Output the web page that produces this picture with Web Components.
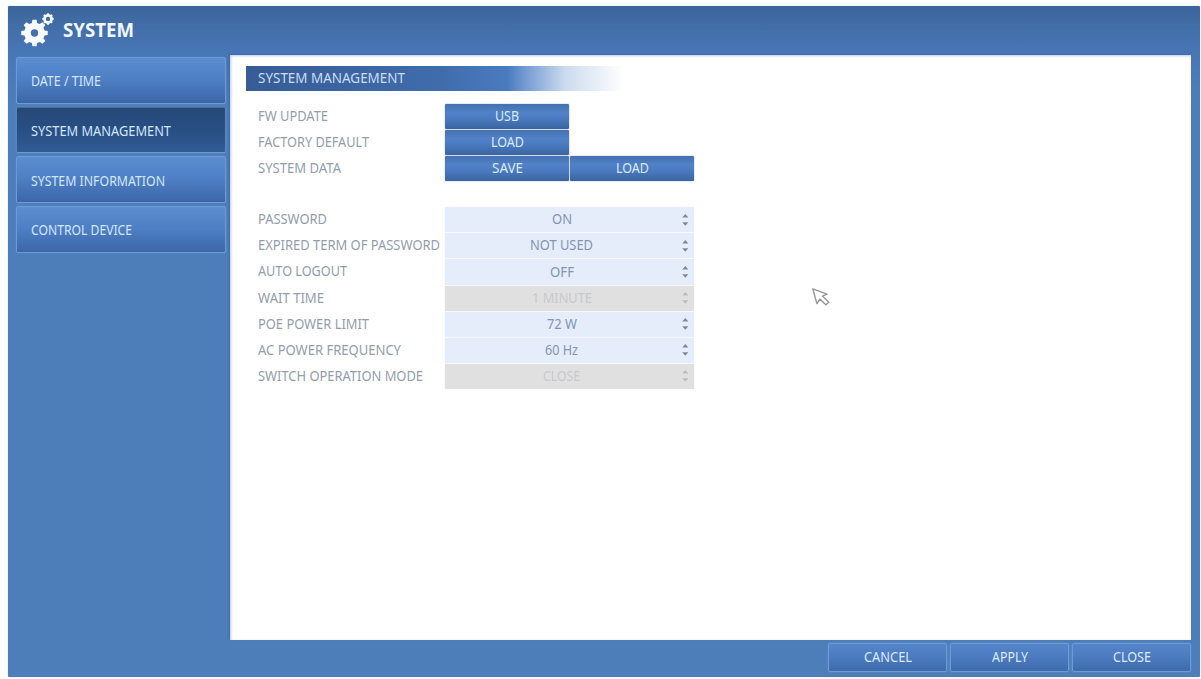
<!DOCTYPE html>
<html lang="en"><head><meta charset="utf-8"><title>System</title>
<style>
html,body{margin:0;height:100%;background:#fdfefe;overflow:hidden}
body{font-family:"Noto Sans","Open Sans",sans-serif;font-size:14px}
</style></head><body>
<system-screen></system-screen>
<script>
const define=(name,css,html,ready)=>{
  const t=document.createElement('template');
  t.innerHTML=`<style>*{box-sizing:border-box}${css}</style>${html}`;
  customElements.define(name,class extends HTMLElement{
    connectedCallback(){
      if(this.shadowRoot)return;
      this.attachShadow({mode:'open'}).append(t.content.cloneNode(true));
      if(ready)ready(this,this.shadowRoot);
    }
  });
};

/* A caption condensed or extended to a fixed width. */
define('fit-text',
  ':host{display:block;flex:none;white-space:nowrap;line-height:20px}span{display:inline-block;transform-origin:0 50%}',
  '<span><slot></slot></span>',
  (el,root)=>{
    const w=+el.getAttribute('w'),s=root.querySelector('span');
    el.style.width=w+'px';
    const n=s.getBoundingClientRect().width;
    if(n)s.style.transform=`scaleX(${w/n})`;
  });

define('gear-icon',':host{display:block;flex:none;width:34px;height:36px}svg{display:block}',
  '<svg width="34" height="36" viewBox="0 0 34 36" fill="#f7fbff"><g id="big"></g><g id="small"></g></svg>',
  (el,root)=>{
    const gear=(cx,cy,ro,ri,hole,n)=>{
      let d='';
      for(let i=0;i<n;i++){
        [[-.32,ri],[-.2,ro],[.2,ro],[.32,ri]].forEach(([o,r],k)=>{
          const a=(i+o)/n*2*Math.PI-Math.PI/2;
          d+=(i||k?'L':'M')+(cx+r*Math.cos(a)).toFixed(2)+' '+(cy+r*Math.sin(a)).toFixed(2);
        });
      }
      return `<path fill-rule="evenodd" d="${d}Z M${cx-hole} ${cy}a${hole} ${hole} 0 1 0 ${2*hole} 0a${hole} ${hole} 0 1 0 ${-2*hole} 0Z"/>`;
    };
    root.getElementById('big').innerHTML=gear(13.5,20,13.4,10.4,3.7,8);
    root.getElementById('small').innerHTML=gear(27,5.9,5.8,4.9,2.2,8);
  });

define('nav-item',`
:host{display:flex;align-items:center;height:46.7px;padding:2px 0 0 14px;border:1px solid #6b9bd8;border-radius:2px;color:#d3e7fc;
background:linear-gradient(#5b8dd0,#4f80c5 45%,#3f6aad 92%,#3c66a3);box-shadow:0 0 1px #6d9bd5;}
:host([selected]){background:linear-gradient(#264876,#284f84 50%,#305b94);border-color:#44709f #5b88bf #6d9bd2 #5585bd}
`,'<slot></slot>');

define('blue-button',`
:host{display:flex;align-items:center;justify-content:center;width:124px;height:25px;padding-bottom:1px;border-radius:1px;color:#d9ebfd;
background:linear-gradient(#4470ae,#5182c8 35%,#4877bb 65%,#3b64a0);box-shadow:0 0 1.5px #7b9dcd}
:host([outlined]){flex:1;width:auto;height:29px;padding:0 0 2px;border:1.5px solid #6b9bd8;border-radius:2px;background:linear-gradient(#5585ca,#4b7abf 50%,#3f6baa)}
`,'<slot></slot>');

define('spin-field',`
:host{display:flex;align-items:center;width:249px;height:25.1px;background:#e5edfb;box-shadow:0 0 1px #e5edfb;color:#8294b2}
:host([disabled]){background:#e0e0e0;box-shadow:0 0 1px #e0e0e0;color:#c9c9cd}
div{flex:1;display:flex;justify-content:center;padding:0 0 1px}
svg{flex:none;width:16px;height:14px;fill:#7c8799}
:host([disabled]) svg{fill:#b9bbc0}
`,'<div><slot></slot></div><svg viewBox="0 0 16 14"><path d="M4.3 4.5 7.3 1l3 3.5zM4.3 9.2h6l-3 3.5z"/></svg>');

define('form-row',`
:host{display:flex;height:26.1px;align-items:flex-start}
.l{width:187px;flex:none;height:25px;display:flex;align-items:center;padding-bottom:1px;color:#929eab}
.c{display:flex;gap:1px}
`,'<div class="l"><slot name="label"></slot></div><div class="c"><slot></slot></div>');

define('section-title',`
:host{display:flex;align-items:center;height:25px;width:390px;margin-left:-12px;padding:0 0 1px 12px;color:#c9def6;
background:linear-gradient(90deg,transparent 67%,rgba(255,255,255,.72) 82%,#fff 97%),linear-gradient(90deg,#375c95,#406cac 50%,#4d7fc5 72%)}
`,'<slot></slot>');

define('pointer-arrow',':host{position:absolute;left:811px;top:287px;width:20px;height:21px}svg{display:block}',
'<svg width="20" height="21" viewBox="0 0 20 21" fill="#fff" stroke="#969696" stroke-width="1.4" stroke-linejoin="round"><path d="M1.8 1.8 16 7.2l-4.6 1.9 6.4 6.2-3 2.5-5.9-5.7-3 4.5z"/></svg>');

const row=(label,w,content)=>`<form-row><fit-text slot="label" w="${w}">${label}</fit-text>${content}</form-row>`;
const btn=(t,w,o='')=>`<blue-button ${o}><fit-text w="${w}">${t}</fit-text></blue-button>`;
const spin=(t,w,o='')=>`<spin-field ${o}><fit-text w="${w}">${t}</fit-text></spin-field>`;
const nav=(t,w,o='')=>`<nav-item ${o}><fit-text w="${w}">${t}</fit-text></nav-item>`;

define('system-screen',`
:host{display:block;height:679px;padding:6px 1px 2px 8px}
.frame{height:671px;display:grid;grid-template:49px 585px 37px/222px 1fr;padding-right:9px;border-radius:1px;
background:linear-gradient(#3b659a,#4470ab 26px,#4877b7 49px,#4e7eb9 100px,#4e7eb9);box-shadow:0 0 1px #82aee0}
header{grid-column:1/3;display:flex;align-items:flex-start;padding:7px 0 0 13px;color:#f0f7ff;font-size:20px;font-weight:700}
header fit-text{margin:7px 0 0 8px}
nav{padding:2px 4px 0 8px;display:flex;flex-direction:column;gap:3px}
main{background:#fff;padding:11px 0 0 28px;box-shadow:inset 1px 1px 3px #b5ccf0,-1px -1px 2px #4668a0}
.form{padding-top:13px}.gap{height:25px}
footer{grid-column:1/3;display:flex;gap:3px;width:363px;margin-left:auto;padding-top:3px}
`,`<div class="frame">
<header><gear-icon></gear-icon><fit-text w="71">SYSTEM</fit-text></header>
<nav>${nav('DATE / TIME',70)}${nav('SYSTEM MANAGEMENT',140,'selected')}${nav('SYSTEM INFORMATION',134)}${nav('CONTROL DEVICE',101)}</nav>
<main><section-title><fit-text w="147">SYSTEM MANAGEMENT</fit-text></section-title>
<div class="form">
${row('FW UPDATE',70,btn('USB',24))}
${row('FACTORY DEFAULT',111,btn('LOAD',33))}
${row('SYSTEM DATA',83,btn('SAVE',31)+btn('LOAD',33))}
<div class="gap"></div>
${row('PASSWORD',69,spin('ON',20))}
${row('EXPIRED TERM OF PASSWORD',182,spin('NOT USED',63))}
${row('AUTO LOGOUT',89,spin('OFF',24))}
${row('WAIT TIME',66,spin('1 MINUTE',60,'disabled'))}
${row('POE POWER LIMIT',111,spin('72 W',30))}
${row('AC POWER FREQUENCY',143,spin('60 Hz',33))}
${row('SWITCH OPERATION MODE',165,spin('CLOSE',37,'disabled'))}
</div></main>
<footer>${btn('CANCEL',48,'outlined')}${btn('APPLY',36,'outlined')}${btn('CLOSE',38,'outlined')}</footer>
</div><pointer-arrow></pointer-arrow>`);
</script></body></html>
